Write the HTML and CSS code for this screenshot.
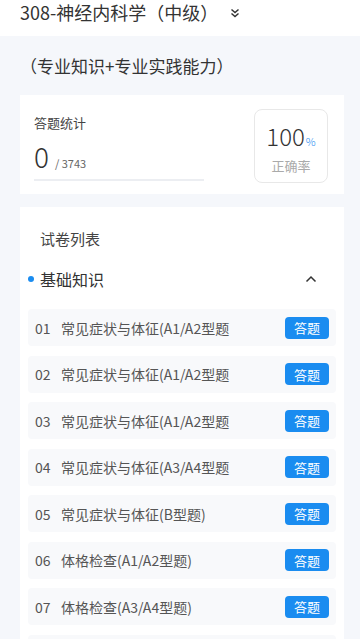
FILE: index.html
```html
<!doctype html>
<html>
  <head>
    <meta charset="utf-8">
    <title>试卷列表</title>
    <meta name="viewport" content="width=device-width">
    <link rel="stylesheet" href="styles.css">
  </head>
  <body>
    <div class="header">
      <span class="title">308-神经内科学（中级）</span>
      <svg class="dbl" width="10" height="10" viewBox="0 0 10 10">
        <path d="M1.5 1.5 L5 4.5 L8.5 1.5 M1.5 5.5 L5 8.5 L8.5 5.5" fill="none" stroke="#333" stroke-width="1.5"/>
      </svg>
    </div>

    <div class="subtitle">（专业知识+专业实践能力）</div>

    <div class="stats card">
      <div class="stats-left">
        <div class="label">答题统计</div>
        <div class="count"><span class="done">0</span><span class="total">/ 3743</span></div>
        <div class="bar"></div>
      </div>
      <div class="rate">
        <div class="pct">100<span>%</span></div>
        <div class="rate-label">正确率</div>
      </div>
    </div>

    <div class="list card">
      <div class="list-title">试卷列表</div>
      <div class="section">
        <span class="dot"></span>
        <span class="section-name">基础知识</span>
        <svg class="up" width="12" height="8" viewBox="0 0 12 8">
          <path d="M1.5 6.5 L6 2 L10.5 6.5" fill="none" stroke="#333" stroke-width="1.5"/>
        </svg>
      </div>

      <div class="row"><span class="num">01</span><span class="name">常见症状与体征(A1/A2型题</span><button class="go">答题</button></div>
      <div class="row"><span class="num">02</span><span class="name">常见症状与体征(A1/A2型题</span><button class="go">答题</button></div>
      <div class="row"><span class="num">03</span><span class="name">常见症状与体征(A1/A2型题</span><button class="go">答题</button></div>
      <div class="row"><span class="num">04</span><span class="name">常见症状与体征(A3/A4型题</span><button class="go">答题</button></div>
      <div class="row"><span class="num">05</span><span class="name">常见症状与体征(B型题)</span><button class="go">答题</button></div>
      <div class="row"><span class="num">06</span><span class="name">体格检查(A1/A2型题)</span><button class="go">答题</button></div>
      <div class="row"><span class="num">07</span><span class="name">体格检查(A3/A4型题)</span><button class="go">答题</button></div>
      <div class="row"></div>
    </div>
  </body>
</html>
```

FILE: styles.css
```css
body {
  margin: 0;
  background: #f5f7fb;
  font-family: "Noto Sans CJK SC", "Noto Sans", sans-serif;
  color: #333;
  height: 639px;
  overflow: hidden;
}
.header {
  height: 36px;
  background: #fff;
  padding-left: 20px;
  display: flex;
  align-items: flex-start;
}
.header .title {
  font-size: 18px;
  line-height: 24px;
  color: #333;
}
.header .dbl {
  margin-left: 12px;
  margin-top: 8px;
}
.subtitle {
  font-size: 17px;
  line-height: 24px;
  color: #333;
  padding: 18px 0 0 20px;
  height: 41px;
}
.card {
  background: #fff;
  margin: 0 16px 0 20px;
}
.stats {
  height: 99px;
  display: flex;
  justify-content: space-between;
}
.stats-left {
  padding: 18px 0 0 14px;
  width: 170px;
}
.stats .label {
  font-size: 13px;
  line-height: 20px;
  color: #444;
}
.stats .count {
  margin-top: 8px;
  height: 30px;
  display: flex;
  align-items: baseline;
}
.stats .done {
  font-size: 28px;
  line-height: 30px;
  color: #333;
  font-weight: 300;
}
.stats .total {
  font-size: 11px;
  color: #666;
  margin-left: 6px;
}
.stats .bar {
  margin-top: 8px;
  height: 2px;
  background: #eceef2;
}
.rate {
  width: 72px;
  height: 72px;
  margin: 14px 16px 0 0;
  border: 1px solid #e8e8e8;
  border-radius: 8px;
  text-align: center;
}
.rate .pct {
  margin-top: 12px;
  font-size: 24px;
  line-height: 28px;
  font-weight: 300;
  color: #333;
}
.rate .pct span {
  font-size: 11px;
  color: #2a8ef0;
  margin-left: 1px;
}
.rate .rate-label {
  font-size: 13px;
  line-height: 18px;
  color: #aaa;
  margin-top: 2px;
}
.list {
  margin-top: 13px;
  padding: 20px 8px 0 8px;
  min-height: 460px;
}
.list-title {
  font-size: 15px;
  line-height: 24px;
  color: #444;
  padding-left: 12px;
}
.section {
  display: flex;
  align-items: center;
  margin-top: 16px;
  height: 24px;
}
.section .dot {
  width: 6px;
  height: 6px;
  border-radius: 50%;
  background: #1a8cf0;
  margin-right: 6px;
}
.section-name {
  font-size: 16px;
  color: #333;
  flex: 1;
}
.section .up {
  margin-right: 19px;
}
.row {
  display: flex;
  align-items: center;
  height: 37px;
  margin-top: 9.5px;
  background: #f8f9fb;
  border-radius: 4px;
  padding: 0 7px;
  font-size: 14px;
  color: #555;
}
.section + .row {
  margin-top: 18px;
}
.row .num {
  width: 26px;
}
.row .name {
  flex: 1;
}
.go {
  width: 44px;
  height: 22px;
  border: 0;
  border-radius: 4px;
  background: #1a8cf0;
  color: #fff;
  font-family: inherit;
  font-size: 13px;
  padding: 0;
}
```
